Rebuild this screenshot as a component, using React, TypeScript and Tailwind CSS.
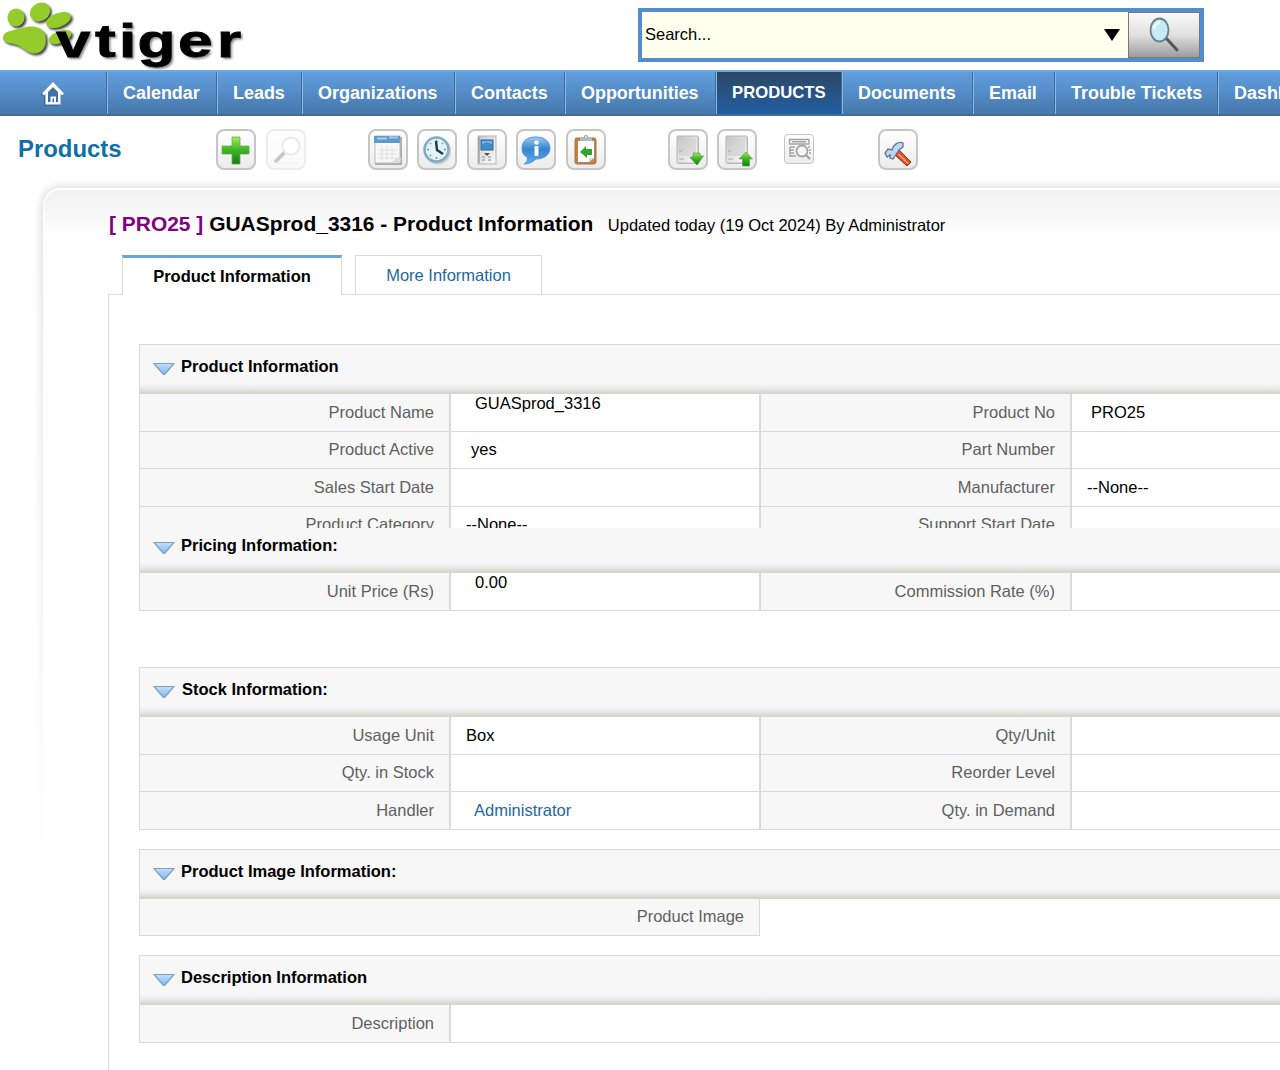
import React from "react";

function Logo() {
  const pads = (
    <>
      <ellipse cx="16" cy="17.5" rx="8.5" ry="9" />
      <ellipse cx="40" cy="12" rx="10.5" ry="9" transform="rotate(-35 40 12)" />
      <ellipse cx="58.500" cy="20" rx="13" ry="7" transform="rotate(-22 58.5 20)" />
      <ellipse cx="60" cy="37" rx="12" ry="6" transform="rotate(-22 60 37)" />
      <path d="M3 37C4 31 14 30 22 28C31 25 41 26 45 34C47 41 46 50 38 53C29 55 25 49 17 45C10 43 1 42 3 37Z" />
    </>
  );
  const word = {
    x: "41.5 70.4 88.1 101.9 131.9 160.7",
    y: 57,
    fontSize: 46,
    fontWeight: 700,
    transform: "scale(1.35 1)",
  } as const;
  return (
    <svg width="260" height="70" viewBox="0 0 260 70" className="block shrink-0">
      <defs>
        <filter id="soft" x="-10%" y="-10%" width="120%" height="130%">
          <feGaussianBlur stdDeviation="1" />
        </filter>
      </defs>
      <g fill="#444" filter="url(#soft)" transform="translate(2 2)">{pads}</g>
      <g fill="#94cc2c">{pads}</g>
      <g filter="url(#soft)" transform="translate(2 2)" aria-hidden="true">
        <text {...word} fill="#888">vtiger</text>
      </g>
      <text {...word} fill="#000" stroke="#000" strokeWidth="0.8">vtiger</text>
    </svg>
  );
}

function NavItem({ label, w, active }: { label: React.ReactNode; w: string; active?: boolean }) {
  return (
    <div
      className={
        "box-border h-[42px] shrink-0 whitespace-nowrap border-l border-r border-l-[#86b9e8] border-r-[#3f6c9c] pl-[15px] leading-[42px] font-bold text-white " +
        w +
        (active ? " bg-linear-to-b from-[#2b4663] to-[#205fa3] text-[16.7px]" : " text-[17.95px]")
      }
    >
      {label}
    </div>
  );
}

function Tool({ children, ml, faded, small }: { children: React.ReactNode; ml: string; faded?: boolean; small?: boolean }) {
  return (
    <div
      className={
        "box-border flex shrink-0 items-center justify-center bg-linear-to-b from-white to-[#ececec] " +
        (small ? "h-[30px] w-[30px] rounded-[4px] border border-[#c4c4c4] " : "h-[41px] w-[40px] rounded-[8px] border-2 border-[#c6c6c6] ") +
        (faded ? "opacity-30 " : "") +
        ml
      }
    >
      {children}
    </div>
  );
}

function Svg({ children }: { children: React.ReactNode }) {
  return (
    <svg width="36" height="36" viewBox="0 0 36 36" className="block shrink-0">
      {children}
    </svg>
  );
}

function Server({ up }: { up?: boolean }) {
  return (
    <Svg>
      <rect x="8" y="5" width="21" height="27" rx="1" fill="#bbb" />
      <rect x="7" y="4" width="21" height="27" rx="1" fill="url(#metal)" stroke="#b5b5b5" />
      <rect x="9" y="6" width="17" height="18" fill="#cbcbcb" opacity=".55" />
      <path d="M9 27h5M9 19h3" stroke="#aaa" />
      {up ? (
        <path d="M27 20L33.5 27H30.5V34H23.5V27H20Z" fill="url(#green)" stroke="#4aa52e" strokeWidth=".6" />
      ) : (
        <path d="M23.5 21H30V24H33.5L27 33L20 25.500L23.500 24Z" fill="url(#green)" stroke="#3f8f28" strokeWidth=".6" />
      )}
    </Svg>
  );
}

function Toolbar() {
  return (
    <div className="flex h-[67px] shrink-0 items-start pt-[13px]">
      <div className="w-[216px] shrink-0 pl-[18px] text-[23.9px] leading-[40px] font-bold text-[#0e70a8]">Products</div>
      <Tool ml="">
        <Svg>
          <path d="M14 5H22V14H31V22H22V32H14V22H4V14H14Z" fill="url(#green)" stroke="#5fb04a" strokeWidth=".8" />
        </Svg>
      </Tool>
      <Tool ml="ml-[10px]" faded>
        <Svg>
          <ellipse cx="20" cy="31" rx="12" ry="1.5" fill="#ddd" />
          <path d="M17 20L8 29" stroke="#444" strokeWidth="3.5" strokeLinecap="round" />
          <circle cx="23" cy="14" r="8.5" fill="#fff" stroke="#bbb" strokeWidth="2" />
        </Svg>
      </Tool>
      <Tool ml="ml-[62px]">
        <Svg>
          <rect x="5" y="5" width="27" height="28" fill="#aaa" />
          <rect x="5" y="4" width="25" height="27" fill="#f8f8f8" stroke="#bbb" />
          <path d="M8 18H28M8 22H28M8 26H26M12 14V29M17 14V29M22 14V29" stroke="#e0e0e0" />
          <rect x="4" y="4" width="26" height="7" fill="#5c99cc" />
          <path d="M7 6.5H17M19 5.5H28" stroke="#a9cde9" strokeWidth="2" />
          <path d="M22 31Q27 23 31 26L30 31Z" fill="#ddd" />
        </Svg>
      </Tool>
      <Tool ml="ml-[9px]">
        <Svg>
          <circle cx="18.5" cy="19" r="13.5" fill="#ccc" />
          <circle cx="17.5" cy="17.5" r="12" fill="#e3f2f9" stroke="#7eabc5" strokeWidth="2.5" />
          <path d="M17.5 8V10M17.5 25V27M8 17.5H10M25 17.5H27M11 11L12 12M24 11L23 12M11 24L12 23" stroke="#6697b2" strokeWidth="1.5" />
          <path d="M17 9L18 18L24 22" fill="none" stroke="#243746" strokeWidth="2.4" />
        </Svg>
      </Tool>
      <Tool ml="ml-[10px]">
        <Svg>
          <rect x="9" y="4" width="18" height="28" fill="url(#metal)" stroke="#b5b5b5" />
          <path d="M10 5V31" stroke="#888" />
          <rect x="12" y="8" width="12" height="10" fill="#408bc9" stroke="#2e6894" />
          <path d="M13 12Q18 9 23 12V9H13Z" fill="#73b7ed" />
          <path d="M15 21H21L18 24Z" fill="#555" />
          <path d="M13 25H16M19 25H22M13 28H16M19 28H22" stroke="#aaa" strokeWidth="1.5" />
        </Svg>
      </Tool>
      <Tool ml="ml-[9px]">
        <Svg>
          <path d="M18 5C27 5 32 10 32 16C32 23 26 27 18 27C15 30 11 32 6 32C9 30 10 28 9 25C5 23 4 20 4 16C4 9 9 5 18 5Z" fill="url(#bubble)" stroke="#5798d5" />
          <rect x="16.500" y="14" width="4" height="10" rx="1" fill="#fff" />
          <circle cx="18.5" cy="10.5" r="2.3" fill="#fff" />
        </Svg>
      </Tool>
      <Tool ml="ml-[10px]">
        <Svg>
          <rect x="7" y="6" width="21" height="26" rx="2" fill="#bd814f" stroke="#a97448" />
          <path d="M10 9H26V26L21 30H10Z" fill="#fff" />
          <path d="M21 30V26H26Z" fill="#ddd" />
          <rect x="12" y="5" width="12" height="4" rx="1" fill="#b5bbb9" />
          <circle cx="18" cy="5" r="1.700" fill="#ddd" stroke="#aaa" />
          <path d="M12 20L18 14V17H24V23H19V26Z" fill="#31a529" />
        </Svg>
      </Tool>
      <Tool ml="ml-[62px]"><Server /></Tool>
      <Tool ml="ml-[9px]"><Server up /></Tool>
      <Tool ml="ml-[27px] mt-[5px]" small>
        <svg width="28" height="28" viewBox="0 0 28 28" className="block" fill="none" stroke="#a3a3a3" strokeWidth="1.4">
          <path d="M4.500 4.500H24V9H4.500Z" />
          <path d="M7 6.800H21M5 12H10M5 15H9M5 18H9M5 21H11M5 12V22M23 12H25M24 15H26M24 18H26" />
          <circle cx="17" cy="16" r="5.500" fill="#f7f7f7" strokeWidth="1.800" />
          <path d="M21 20L25 24" strokeWidth="2.300" />
        </svg>
      </Tool>
      <Tool ml="ml-[64px]">
        <Svg>
          <path d="M15 23L19.500 18.500L31 30L27 34Z" fill="#dc5428" stroke="#7e3020" />
          <path d="M18.500 22L28 31.500" stroke="#ffa082" strokeWidth="1.500" />
          <path d="M23 11C18 9 13 13 12 18L8 17L5 21L7 25L10 23V26L13 27L15 24L19 18L23 15Z" fill="#bfd5ee" stroke="#56759f" strokeWidth="1.300" />
        </Svg>
      </Tool>
    </div>
  );
}

function SectionHeader({ title, flush, pl }: { title: string; flush?: boolean; pl?: string }) {
  return (
    <div
      className={
        "box-border flex border-l border-[#dadada] bg-[linear-gradient(to_top,#d4d4ce_0px,#d9d9d4_2px,#ececea_6px,#f7f7f7_10px)] bg-[#f7f7f7] " +
        (flush ? "h-[45px] pt-[8px]" : "h-[50px] border-t pt-[12px]")
      }
    >
      <svg width="22" height="14" viewBox="0 0 22 14" className="mt-[5px] ml-[13px] block shrink-0">
        <path d="M1 1.500H21L11.500 12.500H10.500Z" fill="url(#tri)" stroke="#7f9fc0" strokeWidth="1.200" strokeLinejoin="round" />
      </svg>
      <span className={"text-[16.5px] leading-[19px] font-bold whitespace-nowrap " + (pl ?? "pl-[6px]")}>{title}</span>
    </div>
  );
}

type Cell = { t?: string; c?: string };

function Row({ h, l1, v1, l2, v2 }: { h: string; l1: string; v1?: Cell; l2: string; v2?: Cell }) {
  const label = "box-border shrink-0 overflow-hidden bg-[#f7f7f7] pr-[15px] text-right text-[#5f5f5f] border-[#dadada] whitespace-nowrap ";
  const value = "box-border shrink-0 overflow-hidden bg-white whitespace-nowrap ";
  return (
    <div className={"box-border flex overflow-hidden border-[#dadada] text-[16.5px] " + h}>
      <div className={label + "w-[310px] border-l"}>{l1}</div>
      <div className={value + "w-[310px] border-l-2 border-[#dadada] " + (v1?.c ?? "")}>{v1?.t}</div>
      <div className={label + "w-[311px] border-l-2"}>{l2}</div>
      <div className={value + "w-[210px] border-l-2 border-[#dadada] " + (v2?.c ?? "")}>{v2?.t}</div>
    </div>
  );
}

export default function App() {
  return (
    <div className="flex h-[1070px] w-[1280px] flex-col overflow-hidden bg-white font-['Liberation_Sans',Arial,sans-serif] text-black">
      <svg width="0" height="0" className="absolute">
        <defs>
          <linearGradient id="green" x1="0" y1="0" x2="0" y2="1">
            <stop offset="0" stopColor="#a5ef5a" /><stop offset=".45" stopColor="#43b52b" /><stop offset="1" stopColor="#147d14" />
          </linearGradient>
          <linearGradient id="metal" x1="0" y1="0" x2="1" y2="1">
            <stop offset="0" stopColor="#c4c4c4" /><stop offset=".5" stopColor="#e5e5e5" /><stop offset="1" stopColor="#fafafa" />
          </linearGradient>
          <linearGradient id="bubble" x1="0" y1="0" x2="0" y2="1">
            <stop offset="0" stopColor="#9bcaf2" /><stop offset=".45" stopColor="#3583d0" /><stop offset="1" stopColor="#5dade9" />
          </linearGradient>
          <linearGradient id="tri" x1="0" y1="0" x2="0" y2="1">
            <stop offset="0" stopColor="#c3defa" /><stop offset="1" stopColor="#7ab8f2" />
          </linearGradient>
        </defs>
      </svg>

      <header className="flex h-[70px] shrink-0 items-start">
        <Logo />
        <div className="mt-[8px] ml-[378px] box-border flex h-[54px] w-[566px] border-4 border-[#538dcd] bg-[#ffffee]">
          <div className="flex-1 pl-[3px] text-[16.5px] leading-[45px]">Search...</div>
          <svg width="16" height="13" viewBox="0 0 16 13" className="mt-[17px] mr-[8px] block">
            <path d="M0 0H16L8 12Z" />
          </svg>
          <div className="box-border flex w-[72px] items-center justify-center border border-[#777] bg-linear-to-b from-[#fafafa] via-[#e0e0e0] to-[#9d9d9d]">
            <svg width="34" height="38" viewBox="0 0 34 38">
              <path d="M19 22L30 34" stroke="#555" strokeWidth="3" strokeLinecap="round" />
              <ellipse cx="12.500" cy="14" rx="9" ry="11.500" fill="#c4ebf7" stroke="#66808c" strokeWidth="1.800" />
              <path d="M7 13Q8 7 13 6" fill="none" stroke="#fff" strokeWidth="2" />
            </svg>
          </div>
        </div>
      </header>

      <nav className="box-border flex h-[46px] shrink-0 border-t-2 border-b-2 border-t-[#6fa9df] border-b-[#426d9b] bg-linear-to-b from-[#619fe0] to-[#4678ab]">
        <div className="box-border flex h-[42px] w-[107px] shrink-0 items-center justify-center border-r border-[#3f6c9c]">
          <svg width="24" height="26" viewBox="0 0 24 26">
            <path d="M12 2.500L23.500 14L21.500 16L20 14.500V25H4V14.500L2.500 16L0.500 14Z" fill="#2f5580" opacity=".5" transform="translate(-1 1)" />
            <path
              fill="#fff"
              fillRule="evenodd"
              d="M12 2L23 13.500L21 15.500L19.500 14V24.500H4.500V14L3 15.500L1 13.500ZM12 7L7 12V22H9.500V16.500H15V22H17V12ZM11.500 18.500V22H13V18.500Z"
            />
          </svg>
        </div>
        <NavItem label="Calendar" w="w-[110px]" />
        <NavItem label="Leads" w="w-[85px]" />
        <NavItem label="Organizations" w="w-[153px]" />
        <NavItem label="Contacts" w="w-[110px]" />
        <NavItem label="Opportunities" w="w-[151px]" />
        <NavItem label="PRODUCTS" w="w-[126px]" active />
        <NavItem label="Documents" w="w-[131px]" />
        <NavItem label="Email" w="w-[82px]" />
        <NavItem label="Trouble Tickets" w="w-[163px]" />
        <NavItem label="Dashboards" w="w-[130px]" />
      </nav>

      <Toolbar />

      <div className="relative min-h-0 flex-1">
        <div className="pointer-events-none absolute top-[5px] left-[43px] h-[900px] w-[1300px] rounded-tl-[18px] border-t-2 border-l border-white bg-[linear-gradient(to_bottom,#f2f2f2_0px,#f4f4f4_14px,#ffffff_46px)] shadow-[-1px_-1px_8px_rgba(0,0,0,0.16)]" />
        <div className="pointer-events-none absolute top-[60px] left-[30px] h-[850px] w-[14px] bg-[linear-gradient(to_bottom,rgba(255,255,255,0)_0px,rgba(255,255,255,1)_640px)]" />

        <div className="relative pt-[26px] pl-[108px]">
          <div className="flex h-[46px] whitespace-nowrap">
            <h1 className="pl-[1px] text-[20.96px] leading-[30px] font-bold">
              <span className="text-[#800080]">[ PRO25 ]</span> GUASprod_3316 - Product Information
            </h1>
            <span className="ml-[14.5px] text-[16.5px] leading-[33px]">Updated today (19 Oct 2024) By Administrator</span>
          </div>

          <div className="flex h-[40px]">
            <div className="box-border w-[14px] border-b border-[#dadada]" />
            <div className="box-border w-[220px] border-t-[3px] border-r border-l border-t-[#6ba0d8] border-r-[#dadada] border-l-[#dadada] bg-white text-center text-[16.5px] leading-[37px] font-bold">
              Product Information
            </div>
            <div className="box-border w-[13px] border-b border-[#dadada]" />
            <div className="box-border w-[187px] border border-[#dadada] text-center text-[16.5px] leading-[38px] text-[#1c69a5]">
              More Information
            </div>
            <div className="box-border flex-1 border-b border-[#dadada]" />
          </div>

          <div className="box-border h-[800px] border-l border-[#dadada] bg-white pt-[49px] pl-[30px]">
            <SectionHeader title="Product Information" />
            <Row h="h-[38px] border-b leading-[36px]" l1="Product Name" v1={{ t: "GUASprod_3316", c: "pl-[24px] leading-[19px]" }} l2="Product No" v2={{ t: "PRO25", c: "pl-[19px]" }} />
            <Row h="h-[37px] border-b leading-[34px]" l1="Product Active" v1={{ t: "yes", c: "pl-[20px]" }} l2="Part Number" />
            <Row h="h-[38px] border-b leading-[36px]" l1="Sales Start Date" l2="Manufacturer" v2={{ t: "--None--", c: "pl-[15px]" }} />
            <Row h="h-[21px] leading-[34px]" l1="Product Category" v1={{ t: "--None--", c: "pl-[15px]" }} l2="Support Start Date" />
            <SectionHeader title="Pricing Information:" flush />
            <Row h="h-[38px] border-b leading-[36px]" l1="Unit Price (Rs)" v1={{ t: "0.00", c: "pl-[24px] leading-[19px]" }} l2="Commission Rate (%)" />
            <div className="h-[56px]" />
            <SectionHeader title="Stock Information:" pl="pl-[7px]" />
            <Row h="h-[38px] border-b leading-[36px]" l1="Usage Unit" v1={{ t: "Box", c: "pl-[15px]" }} l2="Qty/Unit" />
            <Row h="h-[37px] border-b leading-[34px]" l1="Qty. in Stock" l2="Reorder Level" />
            <Row h="h-[38px] border-b leading-[36px]" l1="Handler" v1={{ t: "Administrator", c: "pl-[23px] text-[#1c69a5]" }} l2="Qty. in Demand" />
            <div className="h-[19px]" />
            <SectionHeader title="Product Image Information:" />
            <div className="box-border h-[37px] w-[621px] border-r border-b border-l border-[#dadada] bg-[#f7f7f7] pr-[15px] text-right text-[16.5px] leading-[34px] text-[#5f5f5f]">
              Product Image
            </div>
            <div className="h-[19px]" />
            <SectionHeader title="Description Information" />
            <div className="box-border flex h-[38px] border-b border-[#dadada] text-[16.5px] leading-[36px] text-[#5f5f5f]">
              <div className="box-border w-[310px] shrink-0 border-l border-[#dadada] bg-[#f7f7f7] pr-[15px] text-right">Description</div>
              <div className="box-border flex-1 border-l-2 border-[#dadada] bg-white" />
            </div>
          </div>
        </div>
      </div>
    </div>
  );
}
